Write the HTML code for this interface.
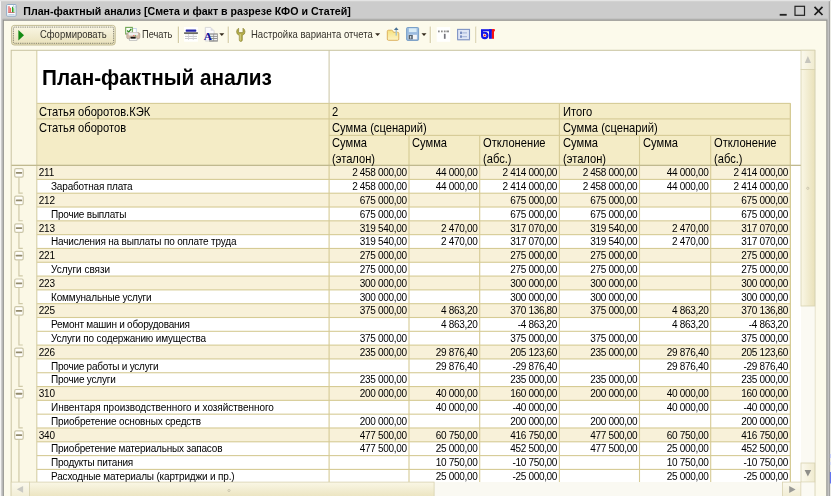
<!DOCTYPE html>
<html><head><meta charset="utf-8"><title>План-фактный анализ</title>
<style>
html,body{margin:0;padding:0;background:#f4f4fa;}
#w{position:relative;width:831px;height:496px;overflow:hidden;font-family:"Liberation Sans",Arial,sans-serif;color:#000;}
#w svg{position:absolute;left:0;top:0;}
#tx{position:absolute;left:0;top:0;width:831px;height:496px;filter:blur(0.22px);}
.t{position:absolute;white-space:pre;}
.b{font-weight:bold;}
.n{letter-spacing:-0.32px;}
.l{letter-spacing:-0.18px;}
</style></head><body>
<div id="w">
<svg width="831" height="496" viewBox="0 0 831 496">
<rect x="0.00" y="0.00" width="831.00" height="496.00" fill="#ecece6" />
<rect x="0.00" y="0.00" width="0.90" height="496.00" fill="#fbfbfb" />
<rect x="0.00" y="0.00" width="831.00" height="1.20" fill="#e4e4e4" />
<rect x="0.90" y="1.20" width="828.90" height="496.00" fill="#cccccc" />
<rect x="828.80" y="1.20" width="1.00" height="496.00" fill="#969696" />
<rect x="2.60" y="19.30" width="824.90" height="477.00" fill="#939390" />
<rect x="2.00" y="19.30" width="0.80" height="477.00" fill="#b8b8b8" />
<rect x="2.60" y="18.40" width="824.90" height="1.00" fill="#bdbdbb" />
<rect x="3.90" y="20.80" width="822.40" height="476.00" fill="#fcfaeb" />
<rect x="11.20" y="50.30" width="803.60" height="431.80" fill="#ffffff" />
<rect x="11.20" y="50.30" width="25.60" height="431.80" fill="#fbf8e6" />
<rect x="36.80" y="103.40" width="753.60" height="62.19" fill="#f4ecc6" />
<rect x="36.80" y="165.59" width="753.60" height="13.81" fill="#f8f1d9" />
<rect x="36.80" y="193.21" width="753.60" height="13.81" fill="#f8f1d9" />
<rect x="36.80" y="220.83" width="753.60" height="13.81" fill="#f8f1d9" />
<rect x="36.80" y="248.45" width="753.60" height="13.81" fill="#f8f1d9" />
<rect x="36.80" y="276.07" width="753.60" height="13.81" fill="#f8f1d9" />
<rect x="36.80" y="303.69" width="753.60" height="13.81" fill="#f8f1d9" />
<rect x="36.80" y="345.12" width="753.60" height="13.81" fill="#f8f1d9" />
<rect x="36.80" y="386.55" width="753.60" height="13.81" fill="#f8f1d9" />
<rect x="36.80" y="427.98" width="753.60" height="13.81" fill="#f8f1d9" />
<rect x="36.80" y="178.85" width="753.60" height="1.10" fill="#d6cb95"/>
<rect x="36.80" y="192.66" width="753.60" height="1.10" fill="#d6cb95"/>
<rect x="36.80" y="206.47" width="753.60" height="1.10" fill="#d6cb95"/>
<rect x="36.80" y="220.28" width="753.60" height="1.10" fill="#d6cb95"/>
<rect x="36.80" y="234.09" width="753.60" height="1.10" fill="#d6cb95"/>
<rect x="36.80" y="247.90" width="753.60" height="1.10" fill="#d6cb95"/>
<rect x="36.80" y="261.71" width="753.60" height="1.10" fill="#d6cb95"/>
<rect x="36.80" y="275.52" width="753.60" height="1.10" fill="#d6cb95"/>
<rect x="36.80" y="289.33" width="753.60" height="1.10" fill="#d6cb95"/>
<rect x="36.80" y="303.14" width="753.60" height="1.10" fill="#d6cb95"/>
<rect x="36.80" y="316.95" width="753.60" height="1.10" fill="#d6cb95"/>
<rect x="36.80" y="330.76" width="753.60" height="1.10" fill="#d6cb95"/>
<rect x="36.80" y="344.57" width="753.60" height="1.10" fill="#d6cb95"/>
<rect x="36.80" y="358.38" width="753.60" height="1.10" fill="#d6cb95"/>
<rect x="36.80" y="372.19" width="753.60" height="1.10" fill="#d6cb95"/>
<rect x="36.80" y="386.00" width="753.60" height="1.10" fill="#d6cb95"/>
<rect x="36.80" y="399.81" width="753.60" height="1.10" fill="#d6cb95"/>
<rect x="36.80" y="413.62" width="753.60" height="1.10" fill="#d6cb95"/>
<rect x="36.80" y="427.43" width="753.60" height="1.10" fill="#d6cb95"/>
<rect x="36.80" y="441.24" width="753.60" height="1.10" fill="#d6cb95"/>
<rect x="36.80" y="455.05" width="753.60" height="1.10" fill="#d6cb95"/>
<rect x="36.80" y="468.86" width="753.60" height="1.10" fill="#d6cb95"/>
<rect x="328.55" y="103.40" width="1.10" height="378.70" fill="#d6cb95"/>
<rect x="408.45" y="135.40" width="1.10" height="346.70" fill="#d6cb95"/>
<rect x="479.15" y="135.40" width="1.10" height="346.70" fill="#d6cb95"/>
<rect x="558.85" y="103.40" width="1.10" height="378.70" fill="#d6cb95"/>
<rect x="638.95" y="135.40" width="1.10" height="346.70" fill="#d6cb95"/>
<rect x="710.15" y="135.40" width="1.10" height="346.70" fill="#d6cb95"/>
<rect x="789.85" y="103.40" width="1.10" height="378.70" fill="#d6cb95"/>
<rect x="789.85" y="103.40" width="1.10" height="378.70" fill="#d6cb95"/>
<rect x="36.80" y="102.85" width="753.60" height="1.10" fill="#d6cb95"/>
<rect x="36.80" y="118.35" width="753.60" height="1.10" fill="#d6cb95"/>
<rect x="329.10" y="134.85" width="461.30" height="1.10" fill="#d6cb95"/>
<rect x="36.25" y="50.30" width="1.10" height="431.80" fill="#d6cfa6"/>
<rect x="328.55" y="50.30" width="1.10" height="53.10" fill="#cfc9ab"/>
<rect x="11.20" y="164.70" width="789.80" height="1.30" fill="#c0b98f"/>
<rect x="11.20" y="50.30" width="803.60" height="450.70" fill="none" stroke="#c9c3a0" stroke-width="1"/>
<path d="M18.95 177.40 V193.11 H22.75" fill="none" stroke="#cfc9a8" stroke-width="1.2"/>
<rect x="14.70" y="168.55" width="8.5" height="8.5" rx="1.4" fill="#fffefa" stroke="#cbc6a8" stroke-width="1.2"/>
<rect x="15.9" y="171.90" width="6.2" height="1.8" rx="0.4" fill="#938b6c"/>
<path d="M18.95 205.02 V220.73 H22.75" fill="none" stroke="#cfc9a8" stroke-width="1.2"/>
<rect x="14.70" y="196.17" width="8.5" height="8.5" rx="1.4" fill="#fffefa" stroke="#cbc6a8" stroke-width="1.2"/>
<rect x="15.9" y="199.52" width="6.2" height="1.8" rx="0.4" fill="#938b6c"/>
<path d="M18.95 232.64 V248.35 H22.75" fill="none" stroke="#cfc9a8" stroke-width="1.2"/>
<rect x="14.70" y="223.79" width="8.5" height="8.5" rx="1.4" fill="#fffefa" stroke="#cbc6a8" stroke-width="1.2"/>
<rect x="15.9" y="227.14" width="6.2" height="1.8" rx="0.4" fill="#938b6c"/>
<path d="M18.95 260.25 V275.97 H22.75" fill="none" stroke="#cfc9a8" stroke-width="1.2"/>
<rect x="14.70" y="251.41" width="8.5" height="8.5" rx="1.4" fill="#fffefa" stroke="#cbc6a8" stroke-width="1.2"/>
<rect x="15.9" y="254.75" width="6.2" height="1.8" rx="0.4" fill="#938b6c"/>
<path d="M18.95 287.88 V303.59 H22.75" fill="none" stroke="#cfc9a8" stroke-width="1.2"/>
<rect x="14.70" y="279.02" width="8.5" height="8.5" rx="1.4" fill="#fffefa" stroke="#cbc6a8" stroke-width="1.2"/>
<rect x="15.9" y="282.38" width="6.2" height="1.8" rx="0.4" fill="#938b6c"/>
<path d="M18.95 315.50 V345.02 H22.75" fill="none" stroke="#cfc9a8" stroke-width="1.2"/>
<rect x="14.70" y="306.64" width="8.5" height="8.5" rx="1.4" fill="#fffefa" stroke="#cbc6a8" stroke-width="1.2"/>
<rect x="15.9" y="310.00" width="6.2" height="1.8" rx="0.4" fill="#938b6c"/>
<path d="M18.95 356.93 V386.45 H22.75" fill="none" stroke="#cfc9a8" stroke-width="1.2"/>
<rect x="14.70" y="348.07" width="8.5" height="8.5" rx="1.4" fill="#fffefa" stroke="#cbc6a8" stroke-width="1.2"/>
<rect x="15.9" y="351.43" width="6.2" height="1.8" rx="0.4" fill="#938b6c"/>
<path d="M18.95 398.36 V427.88 H22.75" fill="none" stroke="#cfc9a8" stroke-width="1.2"/>
<rect x="14.70" y="389.50" width="8.5" height="8.5" rx="1.4" fill="#fffefa" stroke="#cbc6a8" stroke-width="1.2"/>
<rect x="15.9" y="392.86" width="6.2" height="1.8" rx="0.4" fill="#938b6c"/>
<path d="M18.95 439.79 V482.10" fill="none" stroke="#cfc9a8" stroke-width="1.2"/>
<rect x="14.70" y="430.94" width="8.5" height="8.5" rx="1.4" fill="#fffefa" stroke="#cbc6a8" stroke-width="1.2"/>
<rect x="15.9" y="434.29" width="6.2" height="1.8" rx="0.4" fill="#938b6c"/>
<defs><linearGradient id="gv" x1="0" x2="1" y1="0" y2="0"><stop offset="0" stop-color="#faf7e6"/><stop offset="1" stop-color="#e9e1ba"/></linearGradient><linearGradient id="gvb" x1="0" x2="1" y1="0" y2="0"><stop offset="0" stop-color="#fbf9ee"/><stop offset="1" stop-color="#f0ebcf"/></linearGradient><linearGradient id="gh" x1="0" x2="0" y1="0" y2="1"><stop offset="0" stop-color="#faf7e6"/><stop offset="1" stop-color="#e9e1ba"/></linearGradient></defs>
<rect x="801.00" y="50.30" width="13.80" height="431.80" fill="#fbfaf3" />
<rect x="801.00" y="50.30" width="13.80" height="19.10" fill="url(#gvb)" stroke="#d8d2b0" stroke-width="0.8"/>
<rect x="801.00" y="69.50" width="13.80" height="236.50" fill="url(#gv)" stroke="#d8d2b0" stroke-width="0.8"/>
<rect x="801.00" y="463.00" width="13.80" height="19.10" fill="url(#gvb)" stroke="#d8d2b0" stroke-width="0.8"/>
<path d="M804.8 63 L807.9 56 L811 63 Z" fill="#c6c5bd"/>
<path d="M804.6 470 L811.2 470 L807.9 476.5 Z" fill="#8f8f8a"/>
<circle cx="807.8" cy="188.3" r="1.1" fill="none" stroke="#b5b09a" stroke-width="0.6"/>
<defs><linearGradient id="ghb" x1="0" x2="0" y1="0" y2="1"><stop offset="0" stop-color="#fbf9ee"/><stop offset="1" stop-color="#f0ebcf"/></linearGradient></defs>
<rect x="11.20" y="482.10" width="803.60" height="16.00" fill="#faf9f2" />
<rect x="11.20" y="482.10" width="18.20" height="17.00" fill="url(#ghb)" stroke="#d8d2b0" stroke-width="0.8"/>
<rect x="29.40" y="482.10" width="404.70" height="17.00" fill="url(#gh)" stroke="#d8d2b0" stroke-width="0.8"/>
<rect x="782.50" y="482.10" width="18.50" height="17.00" fill="url(#ghb)" stroke="#d8d2b0" stroke-width="0.8"/>
<rect x="801.00" y="482.10" width="13.80" height="17.00" fill="#fbfaf3" stroke="#e0dbc0" stroke-width="0.6"/>
<path d="M23.1 485.9 L23.1 492.7 L16.8 489.3 Z" fill="#c9c9c3"/>
<path d="M789.2 486 L789.2 493 L795.6 489.5 Z" fill="#9a9a96"/>
<circle cx="229" cy="490.5" r="1.1" fill="none" stroke="#b5b09a" stroke-width="0.6"/>
<rect x="829.90" y="454.00" width="1.10" height="4.00" fill="#c4ccf6" />
<rect x="829.90" y="462.00" width="1.10" height="3.00" fill="#d4daf6" />
<rect x="829.90" y="472.00" width="1.10" height="11.50" fill="#6474ee" />
<rect x="779.7" y="13.9" width="7" height="1.8" fill="#222"/>
<rect x="795" y="6.3" width="9.5" height="9" fill="none" stroke="#222" stroke-width="1.2"/>
<path d="M814.5 6.8 L822.5 15 M822.5 6.8 L814.5 15" stroke="#1a1a1a" stroke-width="1.7" fill="none"/>
<rect x="6.7" y="4.5" width="9.4" height="11.7" rx="0.8" fill="#fbfdff" stroke="#86a3bf" stroke-width="0.9"/>
<path d="M13.6 4.5 v2.5 h2.5" fill="none" stroke="#a9c0d6" stroke-width="0.6"/>
<rect x="8.5" y="6.2" width="1" height="6.2" fill="#e02a2a"/><rect x="9.8" y="7.8" width="1.3" height="4.6" fill="#f26a5a"/><rect x="12" y="6.8" width="1.2" height="5.6" fill="#2aa02a"/><rect x="13.3" y="8.2" width="1" height="4.2" fill="#5cc05c"/>
<rect x="8.2" y="12.3" width="6.4" height="0.7" fill="#b05050"/><rect x="8.4" y="14.1" width="6.2" height="0.7" fill="#a9c4e0"/>
<rect x="11.6" y="25.4" width="103.6" height="19.6" rx="2.6" fill="url(#gh)" stroke="#c2bb93" stroke-width="1"/>
<rect x="13.4" y="27.1" width="100.2" height="16.2" rx="1" fill="none" stroke="#55554a" stroke-width="0.8" stroke-dasharray="0.9 0.9"/>
<path d="M18.4 29.9 L18.4 40.6 L24 35.2 Z" fill="#138a13"/>
<rect x="177.80" y="26.6" width="1.2" height="16.4" fill="#d3cba6"/>
<rect x="179.00" y="26.6" width="0.8" height="16.4" fill="#fffef6"/>
<rect x="227.70" y="26.6" width="1.2" height="16.4" fill="#d3cba6"/>
<rect x="228.90" y="26.6" width="0.8" height="16.4" fill="#fffef6"/>
<rect x="429.70" y="26.6" width="1.2" height="16.4" fill="#d3cba6"/>
<rect x="430.90" y="26.6" width="0.8" height="16.4" fill="#fffef6"/>
<rect x="475.30" y="26.6" width="1.2" height="16.4" fill="#d3cba6"/>
<rect x="476.50" y="26.6" width="0.8" height="16.4" fill="#fffef6"/>
<path d="M219.30 33.3 L224.30 33.3 L221.80 36.1 Z" fill="#33291c"/>
<path d="M375.10 33.3 L380.10 33.3 L377.60 36.1 Z" fill="#33291c"/>
<path d="M421.50 33.3 L426.50 33.3 L424.00 36.1 Z" fill="#33291c"/>
<g><rect x="132.8" y="28.4" width="3.4" height="5" fill="#fff" stroke="#a9c0e6" stroke-width="0.6"/><rect x="125.7" y="27.4" width="6.6" height="6.6" fill="#fdfffb" stroke="#6fa552" stroke-width="1.1"/><path d="M127.2 30.5 l1.5 1.7 l2.5 -3.4" stroke="#2f8a22" stroke-width="1.3" fill="none"/><rect x="126.8" y="32.6" width="13" height="6.2" rx="1.6" fill="#d6bca8" stroke="#a89a90" stroke-width="0.7"/><rect x="128.6" y="32.4" width="9.4" height="3" rx="0.8" fill="#eeeeee"/><rect x="129.6" y="38" width="7.4" height="2.6" fill="#fbfbfb" stroke="#9a9a9a" stroke-width="0.5"/><rect x="130.6" y="36.8" width="5" height="1.8" fill="#15120f"/><rect x="133.4" y="35.1" width="1" height="1" fill="#e53030"/><rect x="135.1" y="35.3" width="1" height="1" fill="#3aa83a"/></g>
<g><rect x="184.1" y="27" width="13.8" height="14.7" fill="#fff"/><rect x="185.7" y="29.6" width="10.6" height="2.1" rx="0.6" fill="#2222a8"/><rect x="184.1" y="32.3" width="13.8" height="1.6" fill="#5a5a52"/><rect x="185" y="36.1" width="12" height="0.9" fill="#c4c4c8"/><rect x="185" y="38.1" width="12" height="0.9" fill="#c4c4c8"/><rect x="185" y="34.6" width="12" height="0.6" fill="#dedee2"/><rect x="188.1" y="34" width="0.8" height="6" fill="#d0d0d4"/><rect x="192.8" y="34" width="0.8" height="6" fill="#d0d0d4"/></g>
<g><path d="M205.3 27.4 h5.4 l3.4 3.4 v10.2 h-8.8 z" fill="#fbfbfd" stroke="#c9c9cf" stroke-width="0.7"/><path d="M210.7 27.4 v3.4 h3.4 z" fill="#dcdce2"/><rect x="209.2" y="33.4" width="8.6" height="8.2" fill="#8a8a8a"/><rect x="210" y="34.6" width="3.4" height="1.3" fill="#f4f4f4"/><rect x="214.1" y="34.6" width="3" height="1.3" fill="#f4f4f4"/><rect x="210" y="36.8" width="3.4" height="1.3" fill="#f4f4f4"/><rect x="214.1" y="36.8" width="3" height="1.3" fill="#f4f4f4"/><rect x="210" y="39" width="3.4" height="1.3" fill="#f4f4f4"/><rect x="214.1" y="39" width="3" height="1.3" fill="#f4f4f4"/><text x="203.7" y="39.8" font-family="Liberation Serif,serif" font-weight="bold" font-size="11.4" fill="#12129c">A</text></g>
<g><path d="M238.6 28.2 q-2 1.2 -2 3.6 q0 2.6 2.7 3.6 v4.7 q0 1.3 1.5 1.3 q1.5 0 1.5 -1.3 v-4.7 q2.7 -1 2.7 -3.6 q0 -2.4 -2 -3.6 v3.6 q0 0.8 -0.8 0.8 h-2.8 q-0.8 0 -0.8 -0.8 z" fill="#b5ad4a" stroke="#8a8434" stroke-width="0.7"/><rect x="239.7" y="34" width="1" height="6.6" fill="#d6d08a"/></g>
<defs><linearGradient id="gf" x1="0" x2="0" y1="0" y2="1"><stop offset="0" stop-color="#f6e27e"/><stop offset="1" stop-color="#fdf3c4"/></linearGradient></defs>
<g><path d="M387.3 31.4 q0 -1.2 1.2 -1.2 h3 q0.9 0 1.4 0.9 l0.6 1.2 h4.1 q1.2 0 1.2 1.2 v5.6 q0 1.2 -1.2 1.2 h-9.1 q-1.2 0 -1.2 -1.2 z" fill="url(#gf)" stroke="#d9aa52" stroke-width="0.9"/><rect x="395.5" y="29.6" width="1.5" height="6" fill="#a9c4cc"/><path d="M393.9 29.9 L396.25 27.2 L398.6 29.9 Z" fill="#4a7296"/></g>
<g><rect x="406.6" y="27.5" width="12" height="12.9" rx="1" fill="#9bbce0" stroke="#6f98c4" stroke-width="0.9"/><rect x="408.9" y="28.3" width="7.7" height="3.8" fill="#d9ecf6"/><rect x="408.3" y="34.8" width="8.6" height="4.8" fill="#f4f6f8"/><rect x="408.6" y="35" width="4.2" height="4.4" fill="#55626e"/><rect x="410.2" y="36" width="1" height="2.6" fill="#e8eef2"/><rect x="407.4" y="39.6" width="10.6" height="0.8" fill="#7ea0c4"/></g>
<g><rect x="436.7" y="27.1" width="13.5" height="14.7" fill="#fff"/><rect x="438" y="30.5" width="1.7" height="1.8" fill="#8c8c8c"/><rect x="441" y="30.5" width="1.7" height="1.8" fill="#8c8c8c"/><rect x="443.9" y="30.5" width="1.7" height="1.8" fill="#8c8c8c"/><rect x="446.4" y="30.5" width="2.6" height="1.8" fill="#8c8c8c"/><rect x="443.9" y="33.8" width="1.7" height="5" fill="#74747c"/></g>
<g><rect x="457.6" y="29.4" width="11.9" height="10.2" fill="#dfe6f5" stroke="#7f93c4" stroke-width="1.1"/><rect x="457.4" y="39.6" width="12.6" height="0.8" fill="#a7b3d2"/><rect x="460.3" y="31.6" width="1.4" height="2.4" fill="#4f68aa"/><rect x="462.2" y="32.4" width="4.8" height="1" fill="#9fb0d6"/><rect x="460.3" y="35.4" width="1.4" height="2.4" fill="#4f68aa"/><rect x="462.2" y="36.2" width="4.8" height="1" fill="#9fb0d6"/></g>
<g><rect x="481" y="29.2" width="10.9" height="2.1" fill="#1414e6"/><rect x="489" y="29.2" width="2.9" height="9.6" fill="#1414e6"/><path d="M482.05 30 v5.4 a2.7 2.7 0 1 0 2.7 -2.7 h-2" fill="none" stroke="#1414e6" stroke-width="2.1"/><circle cx="484.7" cy="35.4" r="0.95" fill="#ee1414"/><rect x="491.9" y="29.2" width="3" height="2.1" fill="#f81212"/><rect x="491.9" y="29.2" width="2.1" height="9.6" fill="#f81212"/></g>
</svg>
<div id="tx">
<div class="t b" style="left:23.30px;top:5px;font-size:10.64px;line-height:13px;color:#000;">План-фактный анализ [Смета и факт в разрезе КФО и Статей]</div>
<div class="t " style="left:39.80px;top:28px;font-size:10.6px;line-height:13px;color:#35322b;transform-origin:0 0;transform:scaleX(0.893);">Сформировать</div>
<div class="t " style="left:142.00px;top:28px;font-size:10.6px;line-height:13px;color:#35322b;transform-origin:0 0;transform:scaleX(0.875);">Печать</div>
<div class="t " style="left:250.80px;top:28px;font-size:10.6px;line-height:13px;color:#35322b;transform-origin:0 0;transform:scaleX(0.897);">Настройка варианта отчета</div>
<div class="t b" style="left:41.60px;top:65px;font-size:21.5px;line-height:26px;transform-origin:0 0;transform:scaleX(0.965);">План-фактный анализ</div>
<div class="t " style="left:39.00px;top:105px;font-size:12.2px;line-height:15px;transform-origin:0 0;transform:scaleX(0.915);">Статья оборотов.КЭК</div>
<div class="t " style="left:39.00px;top:121px;font-size:12.2px;line-height:15px;transform-origin:0 0;transform:scaleX(0.915);">Статья оборотов</div>
<div class="t " style="left:332.40px;top:105px;font-size:12.2px;line-height:15px;transform-origin:0 0;transform:scaleX(0.915);">2</div>
<div class="t " style="left:562.70px;top:105px;font-size:12.2px;line-height:15px;transform-origin:0 0;transform:scaleX(0.915);">Итого</div>
<div class="t " style="left:332.40px;top:121px;font-size:12.2px;line-height:15px;transform-origin:0 0;transform:scaleX(0.915);">Сумма (сценарий)</div>
<div class="t " style="left:562.70px;top:121px;font-size:12.2px;line-height:15px;transform-origin:0 0;transform:scaleX(0.915);">Сумма (сценарий)</div>
<div class="t " style="left:332.40px;top:136px;font-size:12.2px;line-height:15px;transform-origin:0 0;transform:scaleX(0.915);">Сумма</div>
<div class="t " style="left:332.40px;top:152px;font-size:12.2px;line-height:15px;transform-origin:0 0;transform:scaleX(0.915);">(эталон)</div>
<div class="t " style="left:412.30px;top:136px;font-size:12.2px;line-height:15px;transform-origin:0 0;transform:scaleX(0.915);">Сумма</div>
<div class="t " style="left:483.00px;top:136px;font-size:12.2px;line-height:15px;transform-origin:0 0;transform:scaleX(0.915);">Отклонение</div>
<div class="t " style="left:483.00px;top:152px;font-size:12.2px;line-height:15px;transform-origin:0 0;transform:scaleX(0.915);">(абс.)</div>
<div class="t " style="left:562.70px;top:136px;font-size:12.2px;line-height:15px;transform-origin:0 0;transform:scaleX(0.915);">Сумма</div>
<div class="t " style="left:562.70px;top:152px;font-size:12.2px;line-height:15px;transform-origin:0 0;transform:scaleX(0.915);">(эталон)</div>
<div class="t " style="left:642.80px;top:136px;font-size:12.2px;line-height:15px;transform-origin:0 0;transform:scaleX(0.915);">Сумма</div>
<div class="t " style="left:714.00px;top:136px;font-size:12.2px;line-height:15px;transform-origin:0 0;transform:scaleX(0.915);">Отклонение</div>
<div class="t " style="left:714.00px;top:152px;font-size:12.2px;line-height:15px;transform-origin:0 0;transform:scaleX(0.915);">(абс.)</div>
<div class="t l" style="left:38.70px;top:167px;font-size:10px;line-height:12px;letter-spacing:-0.200px;">211</div>
<div class="t n" style="right:424.30px;top:167px;font-size:10px;line-height:12px;">2 458 000,00</div>
<div class="t n" style="right:353.60px;top:167px;font-size:10px;line-height:12px;">44 000,00</div>
<div class="t n" style="right:273.90px;top:167px;font-size:10px;line-height:12px;">2 414 000,00</div>
<div class="t n" style="right:193.80px;top:167px;font-size:10px;line-height:12px;">2 458 000,00</div>
<div class="t n" style="right:122.60px;top:167px;font-size:10px;line-height:12px;">44 000,00</div>
<div class="t n" style="right:42.90px;top:167px;font-size:10px;line-height:12px;">2 414 000,00</div>
<div class="t l" style="left:51.00px;top:181px;font-size:10px;line-height:12px;letter-spacing:-0.173px;">Заработная плата</div>
<div class="t n" style="right:424.30px;top:181px;font-size:10px;line-height:12px;">2 458 000,00</div>
<div class="t n" style="right:353.60px;top:181px;font-size:10px;line-height:12px;">44 000,00</div>
<div class="t n" style="right:273.90px;top:181px;font-size:10px;line-height:12px;">2 414 000,00</div>
<div class="t n" style="right:193.80px;top:181px;font-size:10px;line-height:12px;">2 458 000,00</div>
<div class="t n" style="right:122.60px;top:181px;font-size:10px;line-height:12px;">44 000,00</div>
<div class="t n" style="right:42.90px;top:181px;font-size:10px;line-height:12px;">2 414 000,00</div>
<div class="t l" style="left:38.70px;top:195px;font-size:10px;line-height:12px;letter-spacing:-0.200px;">212</div>
<div class="t n" style="right:424.30px;top:195px;font-size:10px;line-height:12px;">675 000,00</div>
<div class="t n" style="right:273.90px;top:195px;font-size:10px;line-height:12px;">675 000,00</div>
<div class="t n" style="right:193.80px;top:195px;font-size:10px;line-height:12px;">675 000,00</div>
<div class="t n" style="right:42.90px;top:195px;font-size:10px;line-height:12px;">675 000,00</div>
<div class="t l" style="left:51.00px;top:209px;font-size:10px;line-height:12px;letter-spacing:-0.208px;">Прочие выплаты</div>
<div class="t n" style="right:424.30px;top:209px;font-size:10px;line-height:12px;">675 000,00</div>
<div class="t n" style="right:273.90px;top:209px;font-size:10px;line-height:12px;">675 000,00</div>
<div class="t n" style="right:193.80px;top:209px;font-size:10px;line-height:12px;">675 000,00</div>
<div class="t n" style="right:42.90px;top:209px;font-size:10px;line-height:12px;">675 000,00</div>
<div class="t l" style="left:38.70px;top:223px;font-size:10px;line-height:12px;letter-spacing:-0.200px;">213</div>
<div class="t n" style="right:424.30px;top:223px;font-size:10px;line-height:12px;">319 540,00</div>
<div class="t n" style="right:353.60px;top:223px;font-size:10px;line-height:12px;">2 470,00</div>
<div class="t n" style="right:273.90px;top:223px;font-size:10px;line-height:12px;">317 070,00</div>
<div class="t n" style="right:193.80px;top:223px;font-size:10px;line-height:12px;">319 540,00</div>
<div class="t n" style="right:122.60px;top:223px;font-size:10px;line-height:12px;">2 470,00</div>
<div class="t n" style="right:42.90px;top:223px;font-size:10px;line-height:12px;">317 070,00</div>
<div class="t l" style="left:51.00px;top:236px;font-size:10px;line-height:12px;letter-spacing:-0.164px;">Начисления на выплаты по оплате труда</div>
<div class="t n" style="right:424.30px;top:236px;font-size:10px;line-height:12px;">319 540,00</div>
<div class="t n" style="right:353.60px;top:236px;font-size:10px;line-height:12px;">2 470,00</div>
<div class="t n" style="right:273.90px;top:236px;font-size:10px;line-height:12px;">317 070,00</div>
<div class="t n" style="right:193.80px;top:236px;font-size:10px;line-height:12px;">319 540,00</div>
<div class="t n" style="right:122.60px;top:236px;font-size:10px;line-height:12px;">2 470,00</div>
<div class="t n" style="right:42.90px;top:236px;font-size:10px;line-height:12px;">317 070,00</div>
<div class="t l" style="left:38.70px;top:250px;font-size:10px;line-height:12px;letter-spacing:-0.200px;">221</div>
<div class="t n" style="right:424.30px;top:250px;font-size:10px;line-height:12px;">275 000,00</div>
<div class="t n" style="right:273.90px;top:250px;font-size:10px;line-height:12px;">275 000,00</div>
<div class="t n" style="right:193.80px;top:250px;font-size:10px;line-height:12px;">275 000,00</div>
<div class="t n" style="right:42.90px;top:250px;font-size:10px;line-height:12px;">275 000,00</div>
<div class="t l" style="left:51.00px;top:264px;font-size:10px;line-height:12px;letter-spacing:-0.018px;">Услуги связи</div>
<div class="t n" style="right:424.30px;top:264px;font-size:10px;line-height:12px;">275 000,00</div>
<div class="t n" style="right:273.90px;top:264px;font-size:10px;line-height:12px;">275 000,00</div>
<div class="t n" style="right:193.80px;top:264px;font-size:10px;line-height:12px;">275 000,00</div>
<div class="t n" style="right:42.90px;top:264px;font-size:10px;line-height:12px;">275 000,00</div>
<div class="t l" style="left:38.70px;top:278px;font-size:10px;line-height:12px;letter-spacing:-0.200px;">223</div>
<div class="t n" style="right:424.30px;top:278px;font-size:10px;line-height:12px;">300 000,00</div>
<div class="t n" style="right:273.90px;top:278px;font-size:10px;line-height:12px;">300 000,00</div>
<div class="t n" style="right:193.80px;top:278px;font-size:10px;line-height:12px;">300 000,00</div>
<div class="t n" style="right:42.90px;top:278px;font-size:10px;line-height:12px;">300 000,00</div>
<div class="t l" style="left:51.00px;top:292px;font-size:10px;line-height:12px;letter-spacing:-0.150px;">Коммунальные услуги</div>
<div class="t n" style="right:424.30px;top:292px;font-size:10px;line-height:12px;">300 000,00</div>
<div class="t n" style="right:273.90px;top:292px;font-size:10px;line-height:12px;">300 000,00</div>
<div class="t n" style="right:193.80px;top:292px;font-size:10px;line-height:12px;">300 000,00</div>
<div class="t n" style="right:42.90px;top:292px;font-size:10px;line-height:12px;">300 000,00</div>
<div class="t l" style="left:38.70px;top:305px;font-size:10px;line-height:12px;letter-spacing:-0.200px;">225</div>
<div class="t n" style="right:424.30px;top:305px;font-size:10px;line-height:12px;">375 000,00</div>
<div class="t n" style="right:353.60px;top:305px;font-size:10px;line-height:12px;">4 863,20</div>
<div class="t n" style="right:273.90px;top:305px;font-size:10px;line-height:12px;">370 136,80</div>
<div class="t n" style="right:193.80px;top:305px;font-size:10px;line-height:12px;">375 000,00</div>
<div class="t n" style="right:122.60px;top:305px;font-size:10px;line-height:12px;">4 863,20</div>
<div class="t n" style="right:42.90px;top:305px;font-size:10px;line-height:12px;">370 136,80</div>
<div class="t l" style="left:51.00px;top:319px;font-size:10px;line-height:12px;letter-spacing:-0.250px;">Ремонт машин и оборудования</div>
<div class="t n" style="right:353.60px;top:319px;font-size:10px;line-height:12px;">4 863,20</div>
<div class="t n" style="right:273.90px;top:319px;font-size:10px;line-height:12px;">-4 863,20</div>
<div class="t n" style="right:122.60px;top:319px;font-size:10px;line-height:12px;">4 863,20</div>
<div class="t n" style="right:42.90px;top:319px;font-size:10px;line-height:12px;">-4 863,20</div>
<div class="t l" style="left:51.00px;top:333px;font-size:10px;line-height:12px;letter-spacing:-0.169px;">Услуги по содержанию имущества</div>
<div class="t n" style="right:424.30px;top:333px;font-size:10px;line-height:12px;">375 000,00</div>
<div class="t n" style="right:273.90px;top:333px;font-size:10px;line-height:12px;">375 000,00</div>
<div class="t n" style="right:193.80px;top:333px;font-size:10px;line-height:12px;">375 000,00</div>
<div class="t n" style="right:42.90px;top:333px;font-size:10px;line-height:12px;">375 000,00</div>
<div class="t l" style="left:38.70px;top:347px;font-size:10px;line-height:12px;letter-spacing:-0.200px;">226</div>
<div class="t n" style="right:424.30px;top:347px;font-size:10px;line-height:12px;">235 000,00</div>
<div class="t n" style="right:353.60px;top:347px;font-size:10px;line-height:12px;">29 876,40</div>
<div class="t n" style="right:273.90px;top:347px;font-size:10px;line-height:12px;">205 123,60</div>
<div class="t n" style="right:193.80px;top:347px;font-size:10px;line-height:12px;">235 000,00</div>
<div class="t n" style="right:122.60px;top:347px;font-size:10px;line-height:12px;">29 876,40</div>
<div class="t n" style="right:42.90px;top:347px;font-size:10px;line-height:12px;">205 123,60</div>
<div class="t l" style="left:51.00px;top:361px;font-size:10px;line-height:12px;letter-spacing:-0.229px;">Прочие работы и услуги</div>
<div class="t n" style="right:353.60px;top:361px;font-size:10px;line-height:12px;">29 876,40</div>
<div class="t n" style="right:273.90px;top:361px;font-size:10px;line-height:12px;">-29 876,40</div>
<div class="t n" style="right:122.60px;top:361px;font-size:10px;line-height:12px;">29 876,40</div>
<div class="t n" style="right:42.90px;top:361px;font-size:10px;line-height:12px;">-29 876,40</div>
<div class="t l" style="left:51.00px;top:374px;font-size:10px;line-height:12px;letter-spacing:-0.200px;">Прочие услуги</div>
<div class="t n" style="right:424.30px;top:374px;font-size:10px;line-height:12px;">235 000,00</div>
<div class="t n" style="right:273.90px;top:374px;font-size:10px;line-height:12px;">235 000,00</div>
<div class="t n" style="right:193.80px;top:374px;font-size:10px;line-height:12px;">235 000,00</div>
<div class="t n" style="right:42.90px;top:374px;font-size:10px;line-height:12px;">235 000,00</div>
<div class="t l" style="left:38.70px;top:388px;font-size:10px;line-height:12px;letter-spacing:-0.200px;">310</div>
<div class="t n" style="right:424.30px;top:388px;font-size:10px;line-height:12px;">200 000,00</div>
<div class="t n" style="right:353.60px;top:388px;font-size:10px;line-height:12px;">40 000,00</div>
<div class="t n" style="right:273.90px;top:388px;font-size:10px;line-height:12px;">160 000,00</div>
<div class="t n" style="right:193.80px;top:388px;font-size:10px;line-height:12px;">200 000,00</div>
<div class="t n" style="right:122.60px;top:388px;font-size:10px;line-height:12px;">40 000,00</div>
<div class="t n" style="right:42.90px;top:388px;font-size:10px;line-height:12px;">160 000,00</div>
<div class="t l" style="left:51.00px;top:402px;font-size:10px;line-height:12px;letter-spacing:-0.042px;">Инвентаря производственного и хозяйственного</div>
<div class="t n" style="right:353.60px;top:402px;font-size:10px;line-height:12px;">40 000,00</div>
<div class="t n" style="right:273.90px;top:402px;font-size:10px;line-height:12px;">-40 000,00</div>
<div class="t n" style="right:122.60px;top:402px;font-size:10px;line-height:12px;">40 000,00</div>
<div class="t n" style="right:42.90px;top:402px;font-size:10px;line-height:12px;">-40 000,00</div>
<div class="t l" style="left:51.00px;top:416px;font-size:10px;line-height:12px;letter-spacing:-0.143px;">Приобретение основных средств</div>
<div class="t n" style="right:424.30px;top:416px;font-size:10px;line-height:12px;">200 000,00</div>
<div class="t n" style="right:273.90px;top:416px;font-size:10px;line-height:12px;">200 000,00</div>
<div class="t n" style="right:193.80px;top:416px;font-size:10px;line-height:12px;">200 000,00</div>
<div class="t n" style="right:42.90px;top:416px;font-size:10px;line-height:12px;">200 000,00</div>
<div class="t l" style="left:38.70px;top:430px;font-size:10px;line-height:12px;letter-spacing:-0.200px;">340</div>
<div class="t n" style="right:424.30px;top:430px;font-size:10px;line-height:12px;">477 500,00</div>
<div class="t n" style="right:353.60px;top:430px;font-size:10px;line-height:12px;">60 750,00</div>
<div class="t n" style="right:273.90px;top:430px;font-size:10px;line-height:12px;">416 750,00</div>
<div class="t n" style="right:193.80px;top:430px;font-size:10px;line-height:12px;">477 500,00</div>
<div class="t n" style="right:122.60px;top:430px;font-size:10px;line-height:12px;">60 750,00</div>
<div class="t n" style="right:42.90px;top:430px;font-size:10px;line-height:12px;">416 750,00</div>
<div class="t l" style="left:51.00px;top:443px;font-size:10px;line-height:12px;letter-spacing:-0.188px;">Приобретение материальных запасов</div>
<div class="t n" style="right:424.30px;top:443px;font-size:10px;line-height:12px;">477 500,00</div>
<div class="t n" style="right:353.60px;top:443px;font-size:10px;line-height:12px;">25 000,00</div>
<div class="t n" style="right:273.90px;top:443px;font-size:10px;line-height:12px;">452 500,00</div>
<div class="t n" style="right:193.80px;top:443px;font-size:10px;line-height:12px;">477 500,00</div>
<div class="t n" style="right:122.60px;top:443px;font-size:10px;line-height:12px;">25 000,00</div>
<div class="t n" style="right:42.90px;top:443px;font-size:10px;line-height:12px;">452 500,00</div>
<div class="t l" style="left:51.00px;top:457px;font-size:10px;line-height:12px;letter-spacing:-0.220px;">Продукты питания</div>
<div class="t n" style="right:353.60px;top:457px;font-size:10px;line-height:12px;">10 750,00</div>
<div class="t n" style="right:273.90px;top:457px;font-size:10px;line-height:12px;">-10 750,00</div>
<div class="t n" style="right:122.60px;top:457px;font-size:10px;line-height:12px;">10 750,00</div>
<div class="t n" style="right:42.90px;top:457px;font-size:10px;line-height:12px;">-10 750,00</div>
<div class="t l" style="left:51.00px;top:471px;font-size:10px;line-height:12px;letter-spacing:-0.167px;">Расходные материалы (картриджи и пр.)</div>
<div class="t n" style="right:353.60px;top:471px;font-size:10px;line-height:12px;">25 000,00</div>
<div class="t n" style="right:273.90px;top:471px;font-size:10px;line-height:12px;">-25 000,00</div>
<div class="t n" style="right:122.60px;top:471px;font-size:10px;line-height:12px;">25 000,00</div>
<div class="t n" style="right:42.90px;top:471px;font-size:10px;line-height:12px;">-25 000,00</div>
</div>
</div>
</body></html>
